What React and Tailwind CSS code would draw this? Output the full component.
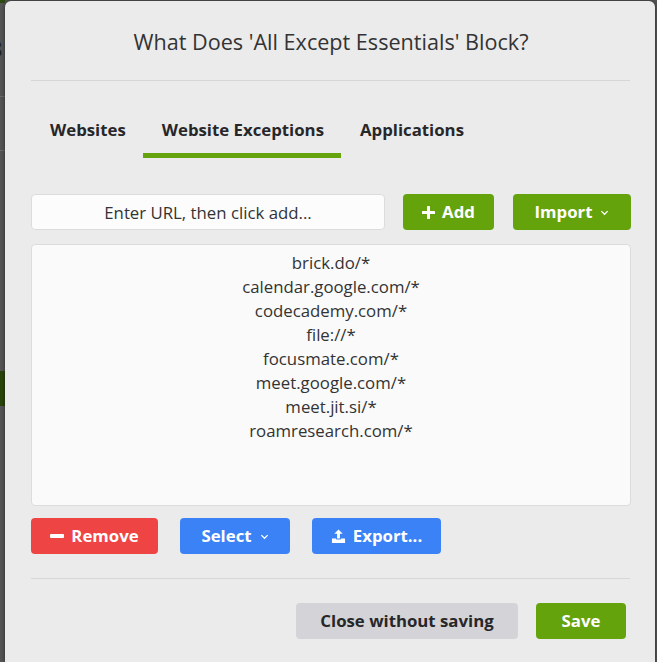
import { useState } from 'react';

const sites = [
  'brick.do/*',
  'calendar.google.com/*',
  'codecademy.com/*',
  'file://*',
  'focusmate.com/*',
  'meet.google.com/*',
  'meet.jit.si/*',
  'roamresearch.com/*',
];

const Chevron = () => (
  <svg className="w-[9px] h-[9px] ml-2" viewBox="0 0 10 10" fill="none" stroke="currentColor" strokeWidth="1.4">
    <path d="M1.5 3.5 5 7l3.5-3.5" />
  </svg>
);

const App = () => {
  const [tab, setTab] = useState('exceptions');
  const [url, setUrl] = useState('');

  const tabs = [
    { id: 'websites', label: 'Websites' },
    { id: 'exceptions', label: 'Website Exceptions' },
    { id: 'applications', label: 'Applications' },
  ];

  return (
    <div className="h-[662px] w-[657px] overflow-hidden bg-[#555] flex" style={{ fontFamily: '"Open Sans", sans-serif' }}>
      {/* page behind the overlay */}
      <div className="w-[5px] shrink-0 flex flex-col">
        <div className="h-[3px] bg-[#2d4a10]" />
        <div className="h-[36px]" />
        <div className="h-[18px] text-[22px] leading-[18px] text-[#222] -ml-[10px] overflow-hidden">8</div>
        <div className="h-[39px]" />
        <div className="h-px bg-[#6a6a6a]" />
        <div className="h-[53px]" />
        <div className="h-px bg-[#6a6a6a]" />
        <div className="h-[220px]" />
        <div className="h-[35px] bg-[#2a450c]" />
      </div>

      <div className="w-[650px] shrink-0 mt-px bg-[#ebebeb] rounded-t-[6px] shadow-[0_0_4px_rgba(0,0,0,0.5)] pl-[26px] pr-[24px] text-[#333]">
        <h2 className="pt-[27px] pb-[24px] text-center text-[21.6px] leading-[28px]">
          What Does 'All Except Essentials' Block?
        </h2>
        <div className="h-px mr-px bg-[#d6d6d8]" />

        <div className="flex mt-[29px]">
          {tabs.map((t) => (
            <button
              key={t.id}
              onClick={() => setTab(t.id)}
              className={`pl-[19px] pr-[17px] pt-[8px] pb-[11px] border-b-[5px] text-[16.8px] leading-[24px] font-bold text-[#27272a] ${
                tab === t.id ? 'border-[#65a30d]' : 'border-transparent'
              }`}
            >
              {t.label}
            </button>
          ))}
        </div>

        <div className="flex mt-[36px] gap-[18px]">
          <input
            value={url}
            onChange={(e) => setUrl(e.target.value)}
            placeholder="Enter URL, then click add..."
            className="flex-1 h-[36px] rounded-[4px] border border-[#dcdcdc] bg-[#fcfcfc] text-center text-[16.8px] placeholder:text-[#333] focus:outline-none"
          />
          <button className="h-[36px] w-[91px] rounded-[4px] bg-[#65a30d] text-white font-bold text-[16.8px] flex items-center justify-center">
            <svg className="w-[13px] h-[13px] mr-[7px]" viewBox="0 0 13 13" fill="currentColor">
              <rect x="5" y="0" width="3" height="13" rx="0.5" />
              <rect x="0" y="5" width="13" height="3" rx="0.5" />
            </svg>
            Add
          </button>
          <button className="ml-px h-[36px] w-[118px] rounded-[4px] bg-[#65a30d] text-white font-bold text-[16.8px] flex items-center justify-center">
            Import
            <Chevron />
          </button>
        </div>

        <div className="mt-[14px] h-[262px] rounded-[4px] border border-[#dcdcdc] bg-[#fafafa] pt-[6px] text-center text-[16.8px] leading-[24px] text-[#333]">
          {sites.map((s) => (
            <div key={s}>{s}</div>
          ))}
        </div>

        <div className="flex mt-[12px] gap-[22px]">
          <button className="h-[36px] w-[127px] rounded-[4px] bg-[#ef4444] text-white font-bold text-[16.8px] flex items-center justify-center">
            <span className="w-[14px] h-[4px] bg-white rounded-[1px] mr-[7px]" />
            Remove
          </button>
          <button className="h-[36px] w-[110px] rounded-[4px] bg-[#3b82f6] text-white font-bold text-[16.8px] flex items-center justify-center">
            Select
            <Chevron />
          </button>
          <button className="h-[36px] w-[129px] rounded-[4px] bg-[#3b82f6] text-white font-bold text-[16.8px] flex items-center justify-center">
            <svg className="w-[15px] h-[15px] mr-[7px]" viewBox="0 0 16 16" fill="currentColor">
              <path d="M8 0.5 3.5 5h3v5h3V5h3z" />
              <path d="M1 10h4.5v1.2h5V10H15v5H1z" />
            </svg>
            Export...
          </button>
        </div>

        <div className="mt-[24px] h-px mr-px bg-[#d6d6d8]" />

        <div className="flex justify-end gap-[18px] mt-[24px] pr-[5px]">
          <button className="h-[36px] w-[222px] rounded-[4px] bg-[#d4d4d8] text-[#27272a] font-bold text-[16.8px]">
            Close without saving
          </button>
          <button className="h-[36px] w-[90px] rounded-[4px] bg-[#65a30d] text-white font-bold text-[16.8px]">
            Save
          </button>
        </div>
      </div>
    </div>
  );
};

export default App;
